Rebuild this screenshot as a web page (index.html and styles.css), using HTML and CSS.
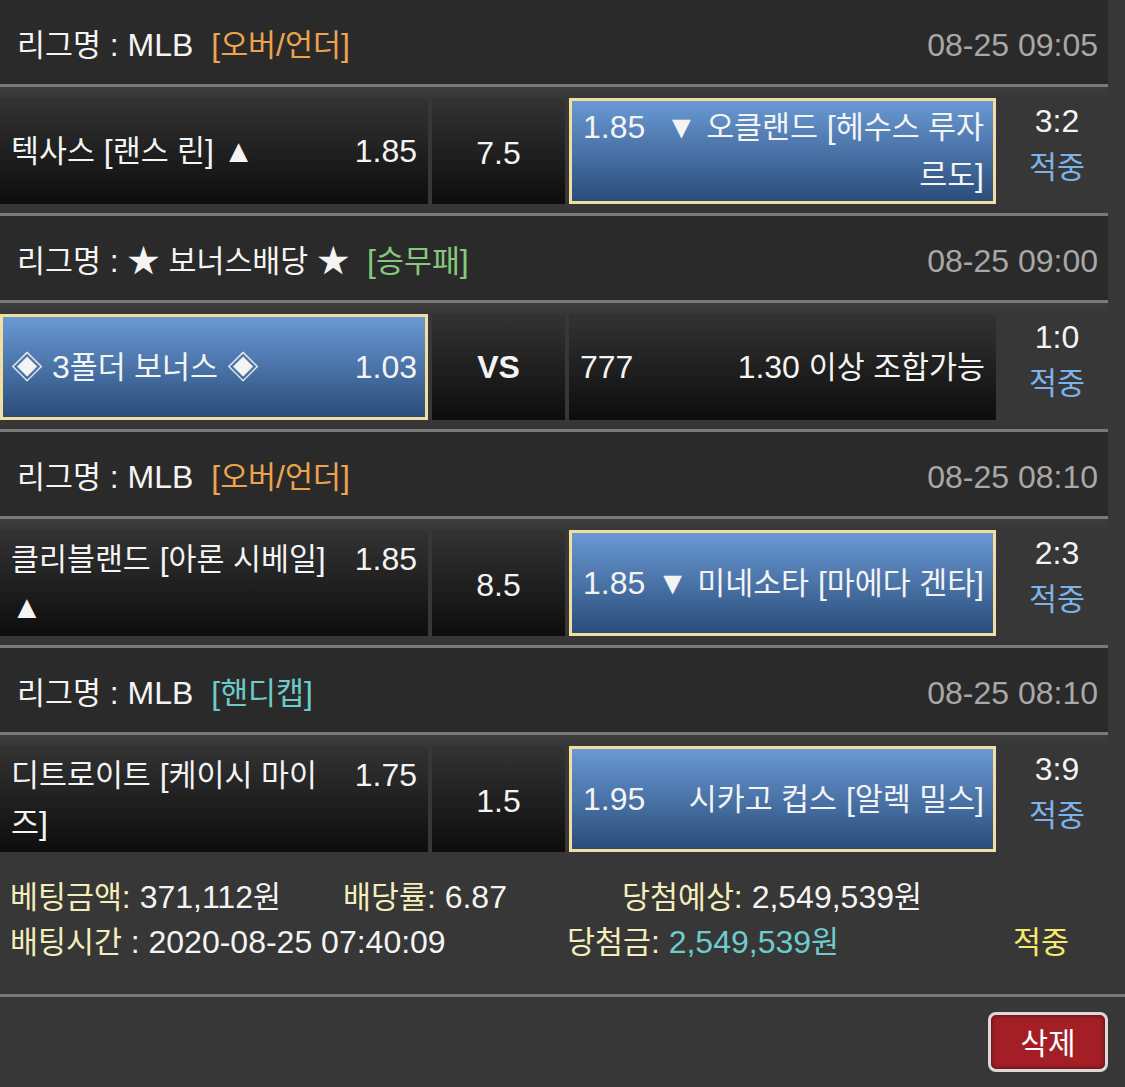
FILE: index.html
```html
<!DOCTYPE html>
<html lang="ko">
<head>
<meta charset="utf-8">
<title>배팅내역</title>
<link rel="stylesheet" href="styles.css">
</head>
<body>
<div class="list">
  <div class="league">
    <div class="lg-name"><span class="k">리그명</span> : MLB <span class="tag orange">[<span class="k">오버</span>/<span class="k">언더</span>]</span></div>
    <div class="lg-time">08-25 09:05</div>
  </div>
  <div class="match">
    <div class="cell home"><div class="inner"><span class="odds">1.85</span><span class="k">텍사스</span> [<span class="k">랜스 린</span>] ▲</div></div>
    <div class="cell mid">7.5</div>
    <div class="cell away picked"><div class="inner"><span class="odds">1.85</span>▼ <span class="k">오클랜드</span> [<span class="k">헤수스 루자 르도</span>]</div></div>
    <div class="score">3:2<br><span class="k hit">적중</span></div>
  </div>

  <div class="league">
    <div class="lg-name"><span class="k">리그명</span> : ★ <span class="k">보너스배당</span> ★ <span class="tag green">[<span class="k">승무패</span>]</span></div>
    <div class="lg-time">08-25 09:00</div>
  </div>
  <div class="match">
    <div class="cell home picked"><div class="inner"><span class="odds">1.03</span>◈ 3<span class="k">폴더 보너스</span> ◈</div></div>
    <div class="cell mid vs">VS</div>
    <div class="cell away"><div class="inner"><span class="odds">777</span>1.30 <span class="k">이상 조합가능</span></div></div>
    <div class="score">1:0<br><span class="k hit">적중</span></div>
  </div>

  <div class="league">
    <div class="lg-name"><span class="k">리그명</span> : MLB <span class="tag orange">[<span class="k">오버</span>/<span class="k">언더</span>]</span></div>
    <div class="lg-time">08-25 08:10</div>
  </div>
  <div class="match">
    <div class="cell home"><div class="inner"><span class="odds">1.85</span><span class="k">클리블랜드</span> [<span class="k">아론 시베일</span>] ▲</div></div>
    <div class="cell mid">8.5</div>
    <div class="cell away picked"><div class="inner"><span class="odds">1.85</span>▼ <span class="k">미네소타</span> [<span class="k">마에다 겐타</span>]</div></div>
    <div class="score">2:3<br><span class="k hit">적중</span></div>
  </div>

  <div class="league">
    <div class="lg-name"><span class="k">리그명</span> : MLB <span class="tag teal">[<span class="k">핸디캡</span>]</span></div>
    <div class="lg-time">08-25 08:10</div>
  </div>
  <div class="match last">
    <div class="cell home"><div class="inner"><span class="odds">1.75</span><span class="k">디트로이트</span> [<span class="k">케이시 마이 즈</span>]</div></div>
    <div class="cell mid">1.5</div>
    <div class="cell away picked"><div class="inner"><span class="odds">1.95</span><span class="k">시카고 컵스</span> [<span class="k">알렉 밀스</span>]</div></div>
    <div class="score">3:9<br><span class="k hit">적중</span></div>
  </div>
</div>

<div class="summary">
  <div class="sum-row r1">
    <div><span class="lbl"><span class="k">베팅금액</span>:</span> 371,112<span class="k">원</span></div>
    <div><span class="lbl"><span class="k">배당률</span>:</span> 6.87</div>
    <div><span class="lbl"><span class="k">당첨예상</span>:</span> 2,549,539<span class="k">원</span></div>
  </div>
  <div class="sum-row r2">
    <div><span class="lbl"><span class="k">배팅시간</span></span> : 2020-08-25 07:40:09</div>
    <div><span class="lbl"><span class="k">당첨금</span>:</span> <span class="won">2,549,539<span class="k">원</span></span></div>
    <div class="yes"><span class="k">적중</span></div>
  </div>
</div>

<div class="actions">
  <button class="btn-del" type="button">삭제</button>
</div>
</body>
</html>
```

FILE: styles.css
```css
* {
  box-sizing: border-box;
}

body {
  margin: 0;
  background: #373737;
  font-family: "Liberation Sans", "Noto Sans CJK KR", sans-serif;
  font-size: 32px;
  color: #f4f4f4;
}

.k {
  font-size: 0.95em;
}

.list {
  width: 1108px;
}

.league {
  height: 87px;
  background: #2a2a2a;
  border-bottom: 3px solid #7a7a7a;
  display: flex;
  align-items: center;
  justify-content: space-between;
  padding: 6px 10px 0 17px;
  line-height: 40px;
  white-space: nowrap;
}

.tag {
  margin-left: 9px;
}

.orange { color: #eda24f; }
.green { color: #86c97c; }
.teal { color: #6ccaca; }

.lg-time {
  color: #a8a8a8;
}

.match {
  display: flex;
  gap: 4px;
  height: 129px;
  padding: 11px 0 9px;
  border-bottom: 3px solid #7a7a7a;
  background: linear-gradient(#3c3c3c, #373737 12px);
}

.match.last {
  height: 126px;
  border-bottom: none;
}

.cell {
  height: 106px;
  border: 3px solid transparent;
  background: linear-gradient(#333333, #0d0d0d) border-box;
  padding: 0 8px;
  display: flex;
  align-items: center;
}

.home {
  width: 428px;
}

.mid {
  width: 133px;
  justify-content: center;
  padding-top: 4px;
}

.vs {
  font-weight: bold;
  padding-top: 0;
}

.away {
  width: 427px;
}

.inner {
  width: 100%;
  line-height: 48px;
}

.home .odds {
  float: right;
  margin-left: 8px;
}

.away .inner {
  text-align: right;
}

.away .odds {
  float: left;
  margin-right: 4px;
}

.picked {
  border-color: #f2de9e;
  background: linear-gradient(#6999d4, #2b4d7b);
}

.picked.away {
  padding: 0 9px 0 11px;
}

.score {
  width: 108px;
  padding-left: 6px;
  text-align: center;
  line-height: 46px;
  align-self: flex-start;
}

.hit {
  color: #7db2e8;
}

.summary {
  border-bottom: 3px solid #7a7a7a;
  padding: 14px 0 29px;
}

.sum-row {
  display: grid;
  line-height: 45px;
  padding-left: 10px;
  white-space: nowrap;
}

.r1 {
  grid-template-columns: 333px 279px auto;
}

.r2 {
  grid-template-columns: 557px 446px auto;
}

.lbl {
  color: #f4eebb;
}

.won {
  color: #6dcdcd;
}

.yes {
  color: #f6e96a;
}

.actions {
  display: flex;
  justify-content: flex-end;
  padding: 15px 17px 0 0;
}

.btn-del {
  width: 120px;
  height: 60px;
  background: #a41f25;
  border: 3px solid #dadada;
  border-radius: 8px;
  color: #ffffff;
  font-family: "Liberation Sans", "Noto Sans CJK KR", sans-serif;
  font-size: 30px;
  box-shadow: inset 0 0 5px rgba(0, 0, 0, 0.55);
  padding: 0 0 2px;
}
```
